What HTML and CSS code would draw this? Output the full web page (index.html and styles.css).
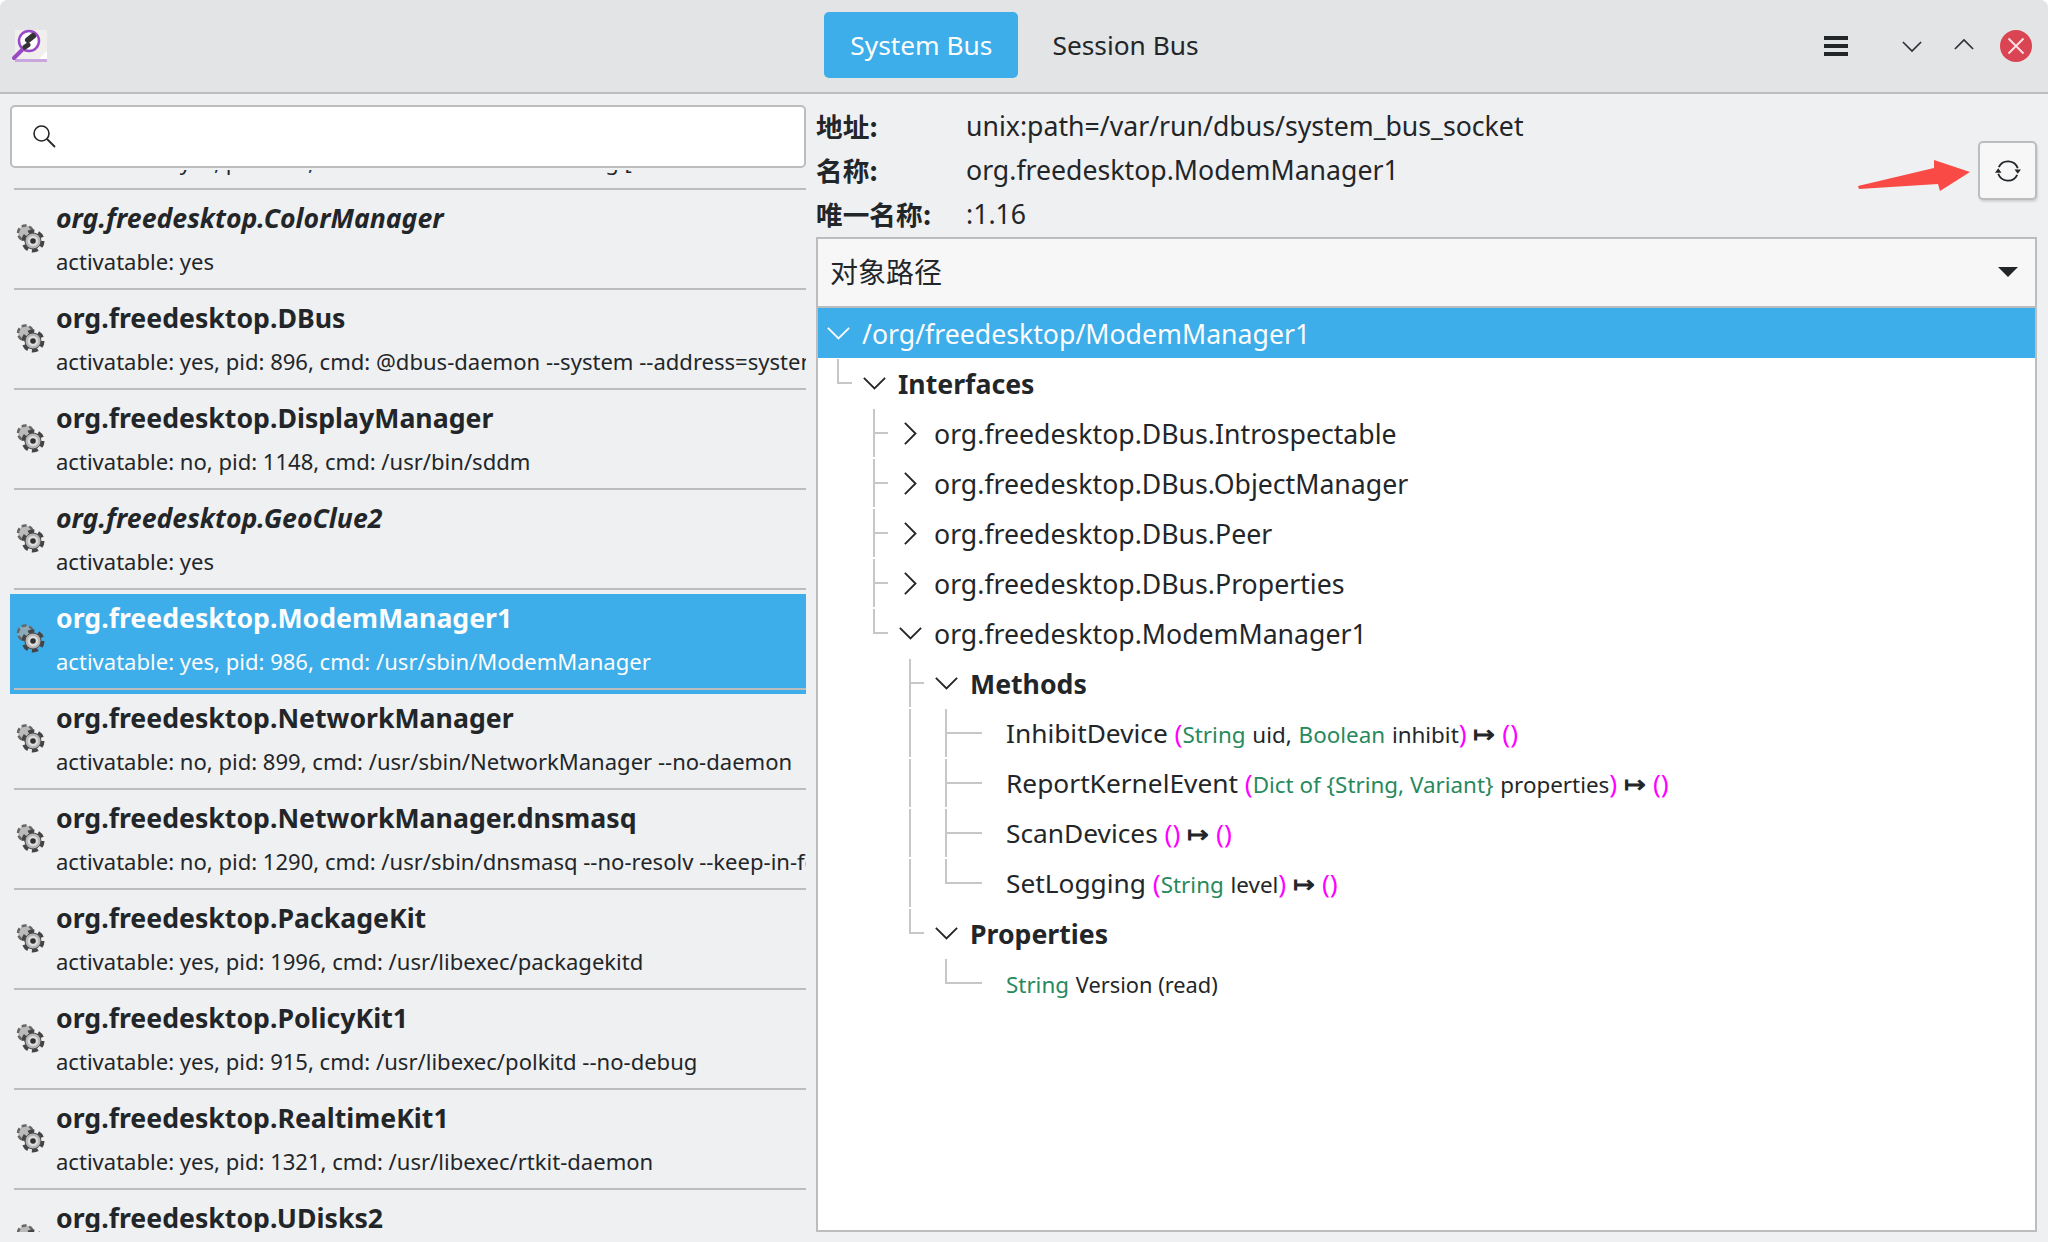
FILE: index.html
```html
<!DOCTYPE html>
<html lang="zh-CN">

<head>
    <meta charset="UTF-8">
    <title>D-Spy</title>
    <link rel="stylesheet" href="styles.css">
</head>

<body>
    <svg class="defs">
        <symbol id="gear" viewBox="0 0 30 30">
            <circle cx="10.500" cy="10" r="7.500" fill="#a8a8a8" fill-opacity="0.75" stroke="#666" stroke-width="2.500" stroke-dasharray="5 2.800"/>
            <circle cx="18" cy="18" r="9.500" fill="none" stroke="#444" stroke-width="4" stroke-dasharray="6 3.950"/>
            <circle cx="18" cy="18" r="8" fill="#b5b5b5" stroke="#4a4a4a" stroke-width="1"/>
            <circle cx="18" cy="18" r="5.200" fill="#dcdcdc"/>
            <circle cx="18" cy="18" r="2.800" fill="#303030"/>
        </symbol>
        <symbol id="down" viewBox="0 0 20 20"><path d="M1.500 5.500 10 14l8.500-8.500" fill="none" stroke="currentColor" stroke-width="1.500"/></symbol>
        <symbol id="right" viewBox="0 0 20 20"><path d="M5.500 1.500 14 10l-8.500 8.500" fill="none" stroke="currentColor" stroke-width="1.500"/></symbol>
    </svg>

    <div class="window">
        <header class="titlebar">
            <svg class="app-icon" viewBox="0 0 40 40" width="40" height="40">
                <rect x="5" y="4" width="32" height="31" fill="#f1eeee"/>
                <rect x="5" y="33" width="32" height="3" fill="#c9a6dd"/>
                <path d="M37 25v8h-8z" fill="#fff"/>
                <path d="M13 23 4 32" stroke="#9a48c6" stroke-width="4" stroke-linecap="round"/>
                <circle cx="19" cy="15" r="10" fill="#fdfdfd" stroke="#9a48c6" stroke-width="2.500"/>
                <path d="M23 10l-5 4" stroke="#333" stroke-width="6" stroke-linecap="round"/>
                <path d="M18 19l-3 2" stroke="#333" stroke-width="5" stroke-linecap="round"/>
            </svg>
            <nav class="tabs">
                <a class="tab tab-active" href="javascript:;">System Bus</a>
                <a class="tab" href="javascript:;">Session Bus</a>
            </nav>
            <div class="controls">
                <span class="burger"><i></i><i></i><i></i></span>
                <svg class="win-btn win-down" viewBox="0 0 22 14" width="20" height="13"><path d="M1 2l10 10L21 2" fill="none" stroke="#2c3034" stroke-width="1.800"/></svg>
                <svg class="win-btn win-up" viewBox="0 0 22 14" width="20" height="13"><path d="M1 12 11 2l10 10" fill="none" stroke="#2c3034" stroke-width="1.800"/></svg>
                <svg class="close-btn" viewBox="0 0 32 32" width="32" height="32">
                    <circle cx="16" cy="16" r="16" fill="#da4453"/>
                    <path d="M8.500 8.500l15 15M23.500 8.500l-15 15" stroke="#fcdfe2" stroke-width="2"/>
                </svg>
            </div>
        </header>

        <main class="body">
            <section class="left">
                <div class="search">
                    <svg viewBox="0 0 26 26" width="26" height="26">
                        <circle cx="10.500" cy="10.500" r="7.500" fill="none" stroke="#232629" stroke-width="1.600"/>
                        <path d="M16 16l8 8" stroke="#232629" stroke-width="1.800"/>
                    </svg>
                </div>
                <div class="list">
                    <ul class="list-inner" id="list"></ul>
                </div>
            </section>

            <section class="right">
                <div class="info">
                    <div class="info-row"><b>地址<span class="colon">:</span></b><span>unix:path=/var/run/dbus/system_bus_socket</span></div>
                    <div class="info-row"><b>名称<span class="colon">:</span></b><span>org.freedesktop.ModemManager1</span></div>
                    <div class="info-row"><b>唯一名称<span class="colon">:</span></b><span>:1.16</span></div>
                    <svg class="arrow" viewBox="0 0 112 32" width="112" height="32">
                        <path d="M0 26 76 8V0l36 12-30 19-2-7L1 29z" fill="#f94a45"/>
                    </svg>
                    <button class="refresh">
                        <svg viewBox="0 0 24 24" width="26" height="26">
                            <g fill="none" stroke="#232629" stroke-width="1.700">
                                <path d="M3.500 8.500A9.500 9.500 0 0 1 21 9.500"/>
                                <path d="M20.500 15.500A9.500 9.500 0 0 1 3 14.500"/>
                            </g>
                            <path d="M18 10.500h6l-3 4zM0 13.500h6l-3-4z" fill="#232629"/>
                        </svg>
                    </button>
                </div>
                <div class="tree">
                    <div class="tree-head"><span>对象路径</span><i class="caret"></i></div>
                    <div id="rows"></div>
                </div>
            </section>
        </main>
    </div>

    <script src="app.js"></script>
</body>

</html>
```

FILE: styles.css
```css
* {
    box-sizing: border-box;
}
html, body {
    margin: 0;
    height: 100%;
}
body {
    background: #fff;
    font-family: "Noto Sans", "Noto Sans CJK SC", sans-serif;
    font-size: 26.67px;
    color: #232629;
    overflow: hidden;
}
.defs {
    display: none;
}
.window {
    height: 1242px;
    background: #eff0f2;
    border-radius: 8px 8px 0 0;
    overflow: hidden;
}

/* title bar */
.titlebar {
    height: 94px;
    background: #e3e4e6;
    border-bottom: 2px solid #bcbdbf;
    display: grid;
    grid-template-columns: 1fr auto 1fr;
    align-items: center;
    padding: 0 16px 0 10px;
}
.app-icon {
    display: block;
}
.tabs {
    display: flex;
    margin: 0 0 2px 7px;
    font-size: 26.3px;
}
.tab {
    height: 66px;
    line-height: 66px;
    padding: 0 26px;
    border-radius: 5px;
    color: #232629;
    text-decoration: none;
}
.tab-active {
    background: #3daee9;
    color: #fcfcfc;
    margin-right: 8px;
}
.controls {
    display: flex;
    align-items: center;
    justify-content: flex-end;
}
.burger {
    display: flex;
    flex-direction: column;
    gap: 4px;
    margin-right: 54px;
}
.burger i {
    display: block;
    width: 24px;
    height: 4px;
    background: #232629;
}
.win-down {
    margin-right: 32px;
}
.win-up {
    margin-right: 26px;
    margin-top: -4px;
}

/* left column */
.body {
    display: flex;
    height: 1148px;
}
.left {
    width: 816px;
    padding: 11px 10px 10px;
    display: flex;
    flex-direction: column;
    flex: none;
}
.search {
    height: 63px;
    flex: none;
    background: #fff;
    border: 2px solid #bcbdbf;
    border-radius: 5px;
    display: flex;
    align-items: center;
    padding: 0 0 2px 19px;
}
.list {
    flex: 1;
    overflow: hidden;
    min-height: 0;
    margin-top: 2px;
}
.list-inner {
    list-style: none;
    margin: -76px 0 0;
    padding: 0;
}
.item {
    height: 100px;
    display: flex;
    align-items: center;
    position: relative;
    padding: 0 0 12px 5px;
}
.item::after {
    content: "";
    position: absolute;
    left: 4px;
    right: 0;
    bottom: 4px;
    height: 2px;
    background: #bcbdbf;
}
.item svg {
    width: 30px;
    height: 30px;
    flex: none;
    filter: blur(0.7px);
}
.item-text {
    margin: 1px 0 0 11px;
    min-width: 0;
    white-space: nowrap;
}
.item-title {
    font-weight: 700;
    line-height: 36px;
    margin-bottom: 9px;
}
.item-sub {
    font-size: 22.05px;
    line-height: 32px;
}
.italic {
    font-style: italic;
}
.selected {
    background: #3daee9;
    color: #fcfcfc;
}

/* right column */
.right {
    flex: 1;
    min-width: 0;
    padding-right: 11px;
    display: flex;
    flex-direction: column;
}
.info {
    height: 143px;
    flex: none;
    padding-top: 9px;
    position: relative;
}
.info-row {
    height: 44px;
    display: flex;
    align-items: center;
}
.info-row b {
    width: 150px;
    flex: none;
}
.colon {
    font-family: "Noto Sans CJK TC", sans-serif;
}
.arrow {
    position: absolute;
    right: 67px;
    top: 66px;
}
.refresh {
    position: absolute;
    right: 0;
    top: 47px;
    width: 59px;
    height: 59px;
    background: #f7f7f8;
    border: 2px solid #bcbdbf;
    border-radius: 5px;
    box-shadow: 1px 2px 2px rgba(0, 0, 0, 0.12);
    display: flex;
    align-items: center;
    justify-content: center;
    padding: 0;
}
.tree {
    height: 995px;
    background: #fff;
    border: 2px solid #bcbdbf;
    overflow: hidden;
}
.tree-head {
    height: 69px;
    background: #f7f7f8;
    border-bottom: 2px solid #bcbdbf;
    display: flex;
    align-items: center;
    justify-content: space-between;
    padding: 0 17px 3px 12px;
    font-size: 28px;
}
.caret {
    width: 0;
    height: 0;
    margin-top: 2px;
    border-left: 10px solid transparent;
    border-right: 10px solid transparent;
    border-top: 10px solid #232629;
}
.row {
    height: 50px;
    display: flex;
    align-items: center;
    white-space: nowrap;
}
.row-active {
    background: #3daee9;
    color: #fcfcfc;
}
.cell {
    width: 36px;
    height: 50px;
    flex: none;
    position: relative;
    display: flex;
    align-items: center;
    justify-content: center;
}
.cell svg {
    width: 25px;
    height: 25px;
}
.first {
    margin-left: 2px;
}
.pipe::before,
.tee::before,
.elbow::before {
    content: "";
    position: absolute;
    left: 17px;
    top: 1px;
    width: 2px;
    background: #c6c7c9;
    bottom: 1px;
}
.elbow::before {
    bottom: 24px;
}
.tee::after,
.elbow::after,
.leaf::after {
    content: "";
    position: absolute;
    left: 17px;
    top: 24px;
    width: 15px;
    height: 2px;
    background: #c6c7c9;
}
.leaf::after {
    left: 0;
    width: 18px;
}
.leaf-row .tee::after,
.leaf-row .elbow::after {
    width: 19px;
}
.label {
    margin-left: 6px;
}
.leaf-row .label {
    font-size: 26.3px;
}
.head {
    font-weight: 700;
}
.green {
    color: #27895c;
    font-size: 22.4px;
}
.pink {
    color: #ff00ff;
}
.small {
    font-size: 22.4px;
}
.version {
    font-size: 21.8px;
}
.ret {
    font-size: 26px;
    font-weight: 700;
}
```

FILE: app.js
```js
let names = [
    ['org.freedesktop.Avahi', 'activatable: yes, pid: 834, cmd: avahi-daemon: running [linux-notebook-master.local]', false],
    ['org.freedesktop.ColorManager', 'activatable: yes', true],
    ['org.freedesktop.DBus', 'activatable: yes, pid: 896, cmd: @dbus-daemon --system --address=systemd: --nofork', false],
    ['org.freedesktop.DisplayManager', 'activatable: no, pid: 1148, cmd: /usr/bin/sddm', false],
    ['org.freedesktop.GeoClue2', 'activatable: yes', true],
    ['org.freedesktop.ModemManager1', 'activatable: yes, pid: 986, cmd: /usr/sbin/ModemManager', false],
    ['org.freedesktop.NetworkManager', 'activatable: no, pid: 899, cmd: /usr/sbin/NetworkManager --no-daemon', false],
    ['org.freedesktop.NetworkManager.dnsmasq', 'activatable: no, pid: 1290, cmd: /usr/sbin/dnsmasq --no-resolv --keep-in-foreground', false],
    ['org.freedesktop.PackageKit', 'activatable: yes, pid: 1996, cmd: /usr/libexec/packagekitd', false],
    ['org.freedesktop.PolicyKit1', 'activatable: yes, pid: 915, cmd: /usr/libexec/polkitd --no-debug', false],
    ['org.freedesktop.RealtimeKit1', 'activatable: yes, pid: 1321, cmd: /usr/libexec/rtkit-daemon', false],
    ['org.freedesktop.UDisks2', 'activatable: yes, pid: 902, cmd: /usr/libexec/udisks2/udisksd', false]
];

let str = '';
names.forEach((item, i) => {
    let [title, sub, italic] = item;
    str += `<li class="item ${i === 5 ? 'selected' : ''}">
        <svg><use href="#gear"></use></svg>
        <div class="item-text">
            <div class="item-title ${italic ? 'italic' : ''}">${title}</div>
            <div class="item-sub">${sub}</div>
        </div>
    </li>`;
});
document.getElementById('list').innerHTML = str;

let g = t => `<span class="green">${t}</span>`;
let s = t => `<span class="small">${t}</span>`;
let p = t => `<span class="pink">${t}</span>`;
let ret = `<span class="ret">↦</span> ${p('()')}`;

// cells: p = pipe, t = tee, e = elbow, _ = blank; then the toggle
let rows = [
    ['', 'down', '/org/freedesktop/ModemManager1', 'row-active'],
    ['e', 'down', '<span class="head">Interfaces</span>'],
    ['_t', 'right', 'org.freedesktop.DBus.Introspectable'],
    ['_t', 'right', 'org.freedesktop.DBus.ObjectManager'],
    ['_t', 'right', 'org.freedesktop.DBus.Peer'],
    ['_t', 'right', 'org.freedesktop.DBus.Properties'],
    ['_e', 'down', 'org.freedesktop.ModemManager1'],
    ['__t', 'down', '<span class="head">Methods</span>'],
    ['__pt', '', `InhibitDevice ${p('(')}${g('String')} ${s('uid,')} ${g('Boolean')} ${s('inhibit')}${p(')')} ${ret}`],
    ['__pt', '', `ReportKernelEvent ${p('(')}${g('Dict of {String, Variant}')} ${s('properties')}${p(')')} ${ret}`],
    ['__pt', '', `ScanDevices ${p('()')} ${ret}`],
    ['__pe', '', `SetLogging ${p('(')}${g('String')} ${s('level')}${p(')')} ${ret}`],
    ['__e', 'down', '<span class="head">Properties</span>'],
    ['___e', '', `${g('String')} <span class="version">Version (read)</span>`]
];
let kinds = { p: 'pipe', t: 'tee', e: 'elbow', _: '' };

let html = '';
rows.forEach(row => {
    let [guides, toggle, text, cls] = row;
    let cells = guides.split('').map((c, i) => `<span class="cell ${kinds[c]} ${i === 0 ? 'first' : ''}"></span>`).join('');
    let icon = toggle
        ? `<span class="cell ${guides ? '' : 'first'}"><svg><use href="#${toggle}"></use></svg></span>`
        : '<span class="cell leaf"></span>';
    html += `<div class="row ${cls || ''} ${toggle ? '' : 'leaf-row'}">${cells}${icon}<span class="label">${text}</span></div>`;
});
document.getElementById('rows').innerHTML = html;
```
